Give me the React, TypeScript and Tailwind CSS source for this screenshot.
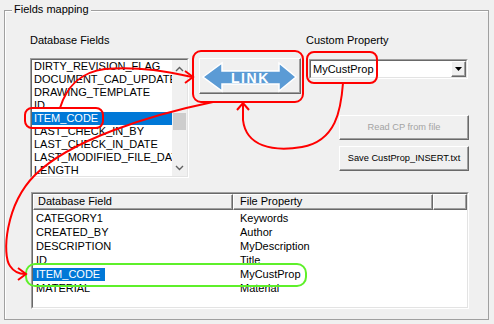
import React from 'react';

const dbFields = [
  'DIRTY_REVISION_FLAG',
  'DOCUMENT_CAD_UPDATE',
  'DRAWING_TEMPLATE',
  'ID',
  'ITEM_CODE',
  'LAST_CHECK_IN_BY',
  'LAST_CHECK_IN_DATE',
  'LAST_MODIFIED_FILE_DATE',
  'LENGTH',
];

const mappings = [
  { field: 'CATEGORY1', prop: 'Keywords' },
  { field: 'CREATED_BY', prop: 'Author' },
  { field: 'DESCRIPTION', prop: 'MyDescription' },
  { field: 'ID', prop: 'Title' },
  { field: 'ITEM_CODE', prop: 'MyCustProp', selected: true },
  { field: 'MATERIAL', prop: 'Material' },
];

// classic raised 3D button border
const raised =
  'border border-t-white border-l-white border-r-[#696969] border-b-[#696969] shadow-[inset_-1px_-1px_0_#a0a0a0] bg-[#f0f0f0]';

function Sunken({ className, children }: { className: string; children: React.ReactNode }) {
  return (
    <div className={`border border-t-[#a0a0a0] border-l-[#a0a0a0] border-r-white border-b-white ${className}`}>
      <div className="w-full h-full border border-t-[#696969] border-l-[#696969] border-r-[#e3e3e3] border-b-[#e3e3e3] overflow-hidden">
        {children}
      </div>
    </div>
  );
}

function FieldList() {
  return (
    <Sunken className="mt-[11px] w-[159px] h-[120px]">
      <div className="flex h-full bg-white">
        <div className="w-[140px] overflow-hidden">
          {dbFields.map(f => (
            <div
              key={f}
              className={`h-[13px] leading-[13px] pl-[2px] whitespace-nowrap ${
                f === 'ITEM_CODE' ? 'bg-[#0078d7] text-white' : ''
              }`}
            >
              {f}
            </div>
          ))}
        </div>
        {/* scrollbar */}
        <div className="w-[15px] bg-[#f0f0f0] flex flex-col items-center">
          <div className="h-[17px] flex items-center justify-center">
            <svg width="9" height="6" viewBox="0 0 9 6">
              <path d="M1 5 L4.5 1.5 L8 5" fill="none" stroke="#606060" strokeWidth="1.4" />
            </svg>
          </div>
          <div className="mt-[36px] w-[13px] h-[17px] bg-[#cdcdcd]" />
          <div className="flex-1" />
          <div className="h-[17px] flex items-center justify-center">
            <svg width="9" height="6" viewBox="0 0 9 6">
              <path d="M1 1 L4.5 4.5 L8 1" fill="none" stroke="#606060" strokeWidth="1.4" />
            </svg>
          </div>
        </div>
      </div>
    </Sunken>
  );
}

function LinkButton() {
  return (
    <button className={`ml-[10px] mt-[24px] w-[102px] h-[36px] p-0 ${raised}`}>
      <svg width="100" height="34" viewBox="0 0 100 34" className="block">
        <path
          d="M3 18 L22 4 L22 12 L79 12 L79 4 L96 18 L79 32 L79 25 L22 25 L22 32 Z"
          fill="#5b9bd5"
          stroke="#ffffff"
          strokeWidth="1.5"
          strokeLinejoin="miter"
        />
        <text
          x="50.5"
          y="24"
          textAnchor="middle"
          fill="#ffffff"
          fontFamily="'Liberation Sans', Arial, sans-serif"
          fontWeight="bold"
          fontSize="14"
          letterSpacing="1.6"
        >
          LINK
        </text>
      </svg>
    </button>
  );
}

function Combo() {
  return (
    <Sunken className="ml-[3px] mt-[12px] w-[159px] h-[20px]">
      <div className="flex h-full bg-white">
        <div className="flex-1 pl-[2px] leading-[16px]">MyCustProp</div>
        <div className={`w-[15px] h-[16px] flex items-center justify-center ${raised}`}>
          <svg width="7" height="4" viewBox="0 0 7 4">
            <path d="M0 0 L7 0 L3.5 4 Z" fill="#000" />
          </svg>
        </div>
      </div>
    </Sunken>
  );
}

function MappingTable() {
  return (
    <Sunken className="ml-[1px] mt-[14px] w-[438px] h-[117px]">
      <div className="h-full bg-white">
        <div className="flex h-[16px] leading-[13px]">
          <div className={`w-[200px] pl-[4px] ${raised}`}>Database Field</div>
          <div className={`w-[200px] pl-[6px] ${raised}`}>File Property</div>
          <div className={`flex-1 ${raised}`} />
        </div>
        <div className="pt-[2px]">
          {mappings.map(m => (
            <div key={m.field} className="flex h-[14px] leading-[13px]">
              <div className="w-[200px]">
                <span
                  className={`inline-block h-[13px] px-[3px] ${m.selected ? 'bg-[#0078d7] text-white pr-[5px]' : ''}`}
                >
                  {m.field}
                </span>
              </div>
              <div className="w-[200px] pl-[7px]">{m.prop}</div>
            </div>
          ))}
        </div>
      </div>
    </Sunken>
  );
}

function Annotations() {
  const red = { fill: 'none', stroke: '#ff0000', strokeWidth: 2 };
  return (
    <svg
      width="494"
      height="324"
      viewBox="0 0 494 324"
      className="absolute inset-0 pointer-events-none"
    >
      <rect x="25" y="108" width="78" height="20" rx="7" {...red} />
      <rect x="193" y="51" width="110" height="51" rx="8" {...red} />
      <rect x="307" y="52" width="70" height="31" rx="7" {...red} />
      <rect x="26" y="264" width="280" height="22" rx="9" fill="none" stroke="#5ef02a" strokeWidth="2" />

      {/* ITEM_CODE -> LINK */}
      <path d="M60 108 C66 88 80 72 105 69 C140 66 170 72 192 77" {...red} />
      <path d="M185 71 L193 77 L185 83" {...red} />

      {/* LINK -> mapping row */}
      <path d="M213 102 C150 115 70 140 35 175 C5 205 2 255 10 266 C14 272 20 274 25 274" {...red} />
      <path d="M18 268 L26 274 L18 280" {...red} />

      {/* custom property -> LINK */}
      <path d="M343 83 C341 110 336 141 302 147 C272 152 246 146 243 120 L243 104" {...red} />
      <path d="M237 110 L243 103 L249 110" {...red} />
    </svg>
  );
}

export default function App() {
  return (
    <div className="relative w-[494px] h-[324px] overflow-hidden bg-[#f0f0f0] pt-[10px] pl-[4px] text-[11px] leading-[13px] text-black font-['Liberation_Sans',Arial,sans-serif]">
      <div className="relative w-[485px] h-[310px] border border-[#a0a0a0] shadow-[inset_1px_1px_0_#fff] pt-[23px] pl-[25px]">
        <span className="absolute left-[7px] top-[-8px] px-[2px] bg-[#f0f0f0]">Fields mapping</span>

        <div className="flex items-start">
          <div className="flex flex-col w-[159px]">
            <div className="h-[13px]">Database Fields</div>
            <FieldList />
          </div>

          <LinkButton />

          <div className="ml-[5px] flex flex-col">
            <div className="h-[13px]">Custom Property</div>
            <Combo />
            <button className={`ml-[33px] mt-[36px] w-[130px] h-[25px] text-[9.25px] text-[#a3a3a3] ${raised}`}>
              Read CP from file
            </button>
            <button className={`ml-[33px] mt-[6px] w-[130px] h-[25px] text-[9.25px] ${raised}`}>
              Save CustProp_INSERT.txt
            </button>
          </div>
        </div>

        <MappingTable />
      </div>

      <Annotations />
    </div>
  );
}
